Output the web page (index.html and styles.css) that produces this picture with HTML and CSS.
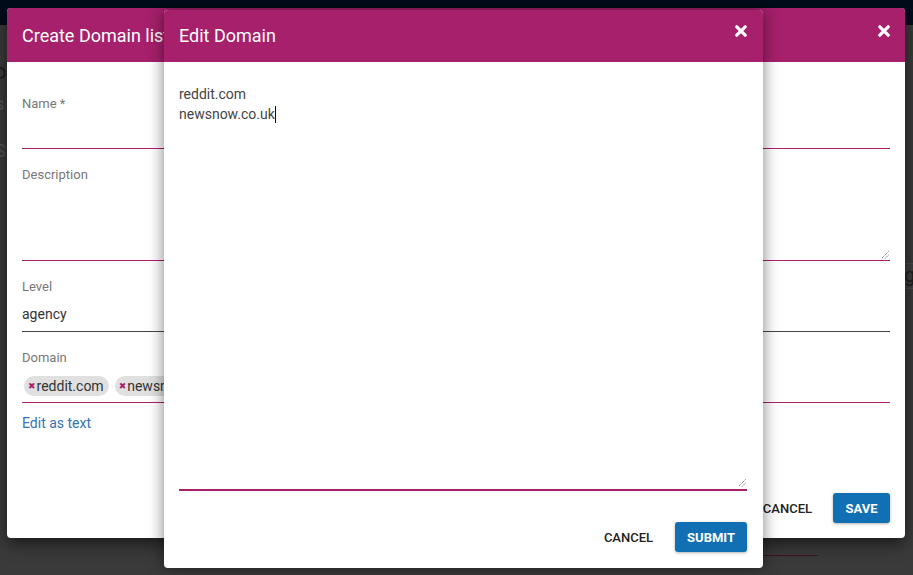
FILE: index.html
```html
<!DOCTYPE html>
<html lang="en">
<head>
<meta charset="utf-8">
<title>Edit Domain</title>
<link rel="stylesheet" href="styles.css">
</head>
<body>
<div class="page">
  <div class="page-top"></div>
  <div class="page-rest">
    <span class="bg-glyph bg-o">o</span>
    <span class="bg-glyph bg-s1">s</span>
    <span class="bg-glyph bg-s2">S</span>
    <span class="bg-box">gi</span>
    <span class="bg-line"></span>
  </div>
</div>

<section class="modal modal-outer">
  <header class="modal-header">
    <h2 class="modal-title">Create Domain list</h2>
    <button class="close-btn" aria-label="Close">
      <svg viewBox="0 0 12 12" width="12" height="12"><path d="M1.8 1.8 L10.2 10.2 M10.2 1.8 L1.8 10.2" stroke="#fff" stroke-width="3.2" stroke-linecap="round"/></svg>
    </button>
  </header>
  <div class="modal-body form">
    <div class="field">
      <label class="field-label">Name *</label>
      <div class="control"></div>
    </div>
    <div class="field">
      <label class="field-label">Description</label>
      <div class="control control-area">
        <svg class="resize" viewBox="0 0 8 8" width="8" height="8"><path d="M7.5 0.5 L0.5 7.5 M7.5 4 L4 7.5" stroke="#555" stroke-width="1" stroke-dasharray="1 1"/></svg>
      </div>
    </div>
    <div class="field">
      <label class="field-label">Level</label>
      <div class="control control-select">agency</div>
    </div>
    <div class="field">
      <label class="field-label">Domain</label>
      <div class="control control-chips">
        <span class="chip"><span class="chip-x">✖</span>reddit.com</span>
        <span class="chip"><span class="chip-x">✖</span>newsnow.co.uk</span>
      </div>
    </div>
    <a class="link" href="#">Edit as text</a>
  </div>
  <footer class="modal-footer">
    <button class="btn btn-flat">CANCEL</button>
    <button class="btn btn-primary">SAVE</button>
  </footer>
</section>

<section class="modal modal-inner">
  <header class="modal-header">
    <h2 class="modal-title">Edit Domain</h2>
    <button class="close-btn" aria-label="Close">
      <svg viewBox="0 0 12 12" width="12" height="12"><path d="M1.8 1.8 L10.2 10.2 M10.2 1.8 L1.8 10.2" stroke="#fff" stroke-width="3.2" stroke-linecap="round"/></svg>
    </button>
  </header>
  <div class="modal-body inner-body">
    <div class="textarea">
      <div class="ta-line">reddit.com</div>
      <div class="ta-line">newsnow.co.uk<span class="caret"></span></div>
      <svg class="resize" viewBox="0 0 8 8" width="8" height="8"><path d="M7.5 0.5 L0.5 7.5 M7.5 4 L4 7.5" stroke="#555" stroke-width="1" stroke-dasharray="1 1"/></svg>
    </div>
  </div>
  <footer class="modal-footer inner-footer">
    <button class="btn btn-flat">CANCEL</button>
    <button class="btn btn-primary">SUBMIT</button>
  </footer>
</section>
</body>
</html>
```

FILE: styles.css
```css
* { box-sizing: border-box; }
html, body { margin: 0; padding: 0; }
body {
  width: 913px;
  height: 575px;
  overflow: hidden;
  position: relative;
  font-family: Roboto, "Noto Sans", "Liberation Sans", sans-serif;
  background: #3a3a3a;
}

/* dimmed page behind */
.page { display: flex; flex-direction: column; height: 100%; }
.page-top { height: 25px; background: #010c1b; flex: none; }
.page-rest { flex: 1; position: relative; background: #3a3a3a; }
.bg-glyph {
  position: absolute;
  color: #1f1f1f;
  font-size: 22px;
  line-height: 1;
}
.bg-o { left: -6px; top: 36px; }
.bg-s1 { left: -5px; top: 70px; font-size: 18px; color: #555; }
.bg-s2 { left: -5px; top: 117px; font-size: 18px; color: #555; }
.bg-box {
  position: absolute;
  left: 900px;
  top: 238px;
  width: 30px;
  height: 26px;
  border: 1px solid #4a4a4a;
  background: #3e3e3e;
  color: #1e1e1e;
  font-size: 20px;
  line-height: 22px;
  padding-left: 3px;
}
.bg-line {
  position: absolute;
  left: 763px;
  top: 530px;
  width: 55px;
  height: 1px;
  background: #3a1226;
}

/* modals */
.modal {
  position: absolute;
  background: #fff;
  border-radius: 4px;
  display: flex;
  flex-direction: column;
  overflow: hidden;
}
.modal-outer {
  left: 7px;
  top: 8px;
  width: 898px;
  height: 530px;
  box-shadow: 0 6px 16px rgba(0, 0, 0, 0.55);
}
.modal-inner {
  left: 164px;
  top: 10px;
  width: 599px;
  height: 558px;
  box-shadow: 0 0 16px rgba(0, 0, 0, 0.5);
}
.modal-header {
  flex: none;
  background: #a6206b;
  display: flex;
  align-items: center;
  justify-content: space-between;
  padding: 0 15px;
}
.modal-outer .modal-header { height: 54px; }
.modal-inner .modal-header { height: 52px; padding-right: 16px; }
.modal-title {
  margin: 0;
  color: #fff;
  font-size: 18px;
  font-weight: 400;
  line-height: 22px;
  padding-top: 2px;
}
.modal-inner .modal-title { padding-top: 0; }
.close-btn {
  border: 0;
  background: none;
  padding: 0;
  width: 12px;
  height: 12px;
  margin-top: -8px;
  display: block;
  cursor: pointer;
}
.close-btn svg { display: block; }
.modal-inner .close-btn { margin-top: -10px; }

.modal-body { flex: 1; }

/* outer form */
.form {
  padding: 33px 15px 0;
  display: flex;
  flex-direction: column;
}
.field { margin-bottom: 17px; }
.field-label {
  display: block;
  font-size: 13px;
  line-height: 16px;
  padding-top: 1px;
  color: #777;
}
.control {
  height: 37px;
  border-bottom: 1px solid #a81f6c;
  position: relative;
}
.control-area { height: 78px; }
.control-area .resize { position: absolute; right: 1px; bottom: 1px; }
.control-select {
  border-bottom-color: #444;
  padding-top: 9px;
  font-size: 14px;
  line-height: 20px;
  color: #333;
}
.control-chips {
  padding-top: 10px;
  display: flex;
  gap: 6px;
  white-space: nowrap;
  overflow: hidden;
}
.chip {
  display: inline-flex;
  align-items: center;
  height: 20px;
  padding: 0 5px 0 4px;
  border-radius: 10px;
  background: #e0e0e0;
  color: #333;
  font-size: 14px;
  line-height: 20px;
  margin-left: 2px;
}
.chip + .chip { margin-left: 0; }
.chip-x {
  color: #a81f6c;
  font-size: 9px;
  font-weight: 700;
  margin-right: 1px;
  font-family: "DejaVu Sans", sans-serif;
}
.link {
  margin-top: -5px;
  font-size: 14px;
  line-height: 16px;
  color: #3473b5;
  text-decoration: none;
}

/* footers */
.modal-footer {
  flex: none;
  display: flex;
  justify-content: flex-end;
  align-items: center;
  padding: 0 15px 15px;
}
.btn {
  font-family: Roboto, "Liberation Sans", sans-serif;
  font-size: 13px;
  height: 30px;
  border: 0;
  border-radius: 3px;
  cursor: pointer;
}
.btn-flat {
  background: none;
  color: #222;
  font-weight: 500;
  padding: 0 11px;
  margin-right: 11px;
}
.btn-primary {
  background: #1170b4;
  color: #fff;
  font-weight: 700;
  padding: 0 12px;
  box-shadow: 0 1px 3px rgba(0, 0, 0, 0.3);
}
.modal-outer .btn-primary { min-width: 57px; }
.modal-outer .btn-flat { margin-right: 10px; }

/* inner body */
.inner-body {
  padding: 22px 16px 0 15px;
  display: flex;
  flex-direction: column;
}
.textarea {
  flex: 1;
  position: relative;
  border-bottom: 2px solid #a81f6c;
  font-size: 14px;
  line-height: 20px;
  color: #444;
}
.textarea .resize { position: absolute; right: 1px; bottom: 2px; }
.caret {
  display: inline-block;
  width: 1px;
  height: 17px;
  background: #111;
  vertical-align: -4px;
}
.inner-footer { padding: 31px 16px 16px; }
```
